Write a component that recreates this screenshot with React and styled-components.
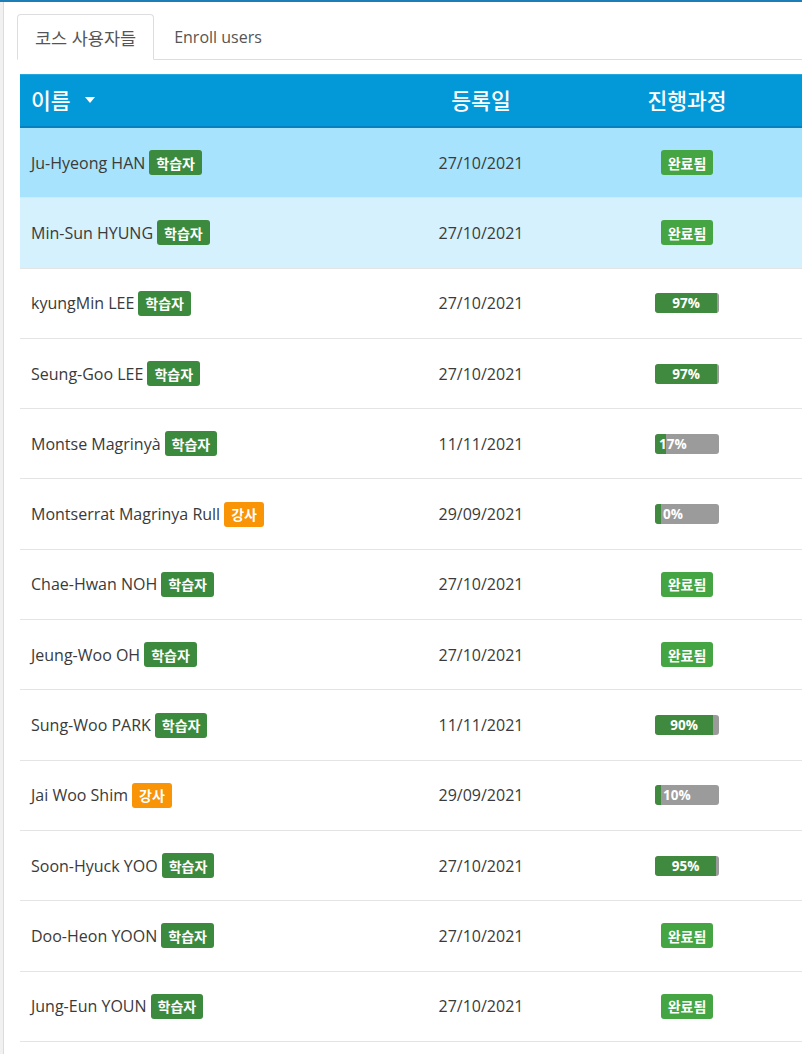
import React from "react";
import styled, { createGlobalStyle } from "styled-components";

const Global = createGlobalStyle`
  html, body { margin: 0; padding: 0; background: #fff; }
  body { font-family: "Open Sans", "Noto Sans CJK KR", sans-serif; color: #333; }
  * { box-sizing: border-box; }
`;

const Page = styled.div`
  border-top: 2px solid #1b7fb5;
  display: flex;
  min-height: 1054px;
  overflow: hidden;
`;

const Gutter = styled.div`
  width: 3px;
  flex: none;
  background: #f1f1f1;
`;

const Main = styled.div`
  flex: 1;
  border-left: 1px solid #dcdcdc;
  padding: 12px 0 0 16px;
  min-width: 0;
`;

const TabBar = styled.div`
  display: flex;
  align-items: flex-end;
  margin-left: -3px;
  border-bottom: 1px solid #dddddd;
  height: 46px;
`;

const Tab = styled.div`
  height: ${(p) => (p.$active ? "46px" : "45px")};
  margin-bottom: ${(p) => (p.$active ? "-1px" : "0")};
  padding: 0 ${(p) => (p.$active ? "17px" : "19px")};
  display: flex;
  align-items: center;
  font-size: ${(p) => (p.$ko ? "17.5px" : "16px")};
  color: #555;
  background: #fff;
  border: 1px solid ${(p) => (p.$active ? "#dddddd" : "transparent")};
  border-bottom-color: ${(p) => (p.$active ? "#fff" : "transparent")};
  border-radius: 4px 4px 0 0;
  padding-top: 1px;
`;

const Table = styled.div`
  margin-top: 14px;
  width: 782px;
`;

const Grid = styled.div`
  display: grid;
  grid-template-columns: 370px 182px 230px;
  align-items: center;
`;

const HeadRow = styled(Grid)`
  height: 54px;
  background: #0399d8;
  border-top: 1px solid #23a8e0;
  border-bottom: 2px solid #0781be;
  color: #fff;
  font-family: "Noto Sans CJK KR", "Open Sans", sans-serif;
  font-size: 21.5px;
  font-weight: 500;
`;

const HeadCell = styled.div`
  display: flex;
  align-items: center;
  justify-content: ${(p) => (p.$center ? "center" : "flex-start")};
  padding-left: ${(p) => (p.$center ? "0" : "11px")};
  padding-bottom: 3px;
  gap: 14px;
`;

const Caret = styled.span`
  width: 0;
  height: 0;
  border-left: 5.5px solid transparent;
  border-right: 5.5px solid transparent;
  border-top: 6px solid #fff;
  margin-top: 2px;
`;

const Row = styled(Grid)`
  height: 70.3px;
  border-bottom: 1px solid #e4e4e4;
  background: ${(p) => p.$bg || "#fff"};
  font-size: 16px;
  color: #3a3a3a;
`;

const NameCell = styled.div`
  padding-left: 11px;
  display: flex;
  align-items: center;
  gap: 4px;
  white-space: nowrap;
`;

const Center = styled.div`
  display: flex;
  justify-content: center;
`;

const Badge = styled.span`
  display: inline-flex;
  align-items: center;
  height: 25px;
  padding: 0 7px;
  border-radius: 3px;
  background: ${(p) => p.$color};
  color: #fff;
  font-family: "Noto Sans CJK KR", sans-serif;
  font-weight: 700;
  font-size: 14px;
`;

const Bar = styled.div`
  position: relative;
  width: 64px;
  height: 20px;
  background: #9b9b9b;
  border-radius: 3px;
  overflow: hidden;
`;

const Fill = styled.div`
  height: 100%;
  background: #3f8a3f;
  border-radius: 3px 0 0 3px;
`;

const BarLabel = styled.span`
  position: absolute;
  top: 0;
  bottom: 0;
  display: flex;
  align-items: center;
  color: #fff;
  font-size: 13.5px;
  font-weight: 700;
  font-family: "Open Sans", sans-serif;
`;

const GREEN = "#3c8a3e";
const ORANGE = "#f89406";
const DONE = "#45a543";

const rows = [
  { name: "Ju-Hyeong HAN", role: "학습자", date: "27/10/2021", done: true, bg: "#a7e3fc" },
  { name: "Min-Sun HYUNG", role: "학습자", date: "27/10/2021", done: true, bg: "#d4f1fd" },
  { name: "kyungMin LEE", role: "학습자", date: "27/10/2021", pct: 97 },
  { name: "Seung-Goo LEE", role: "학습자", date: "27/10/2021", pct: 97 },
  { name: "Montse Magrinyà", role: "학습자", date: "11/11/2021", pct: 17 },
  { name: "Montserrat Magrinya Rull", role: "강사", date: "29/09/2021", pct: 0 },
  { name: "Chae-Hwan NOH", role: "학습자", date: "27/10/2021", done: true },
  { name: "Jeung-Woo OH", role: "학습자", date: "27/10/2021", done: true },
  { name: "Sung-Woo PARK", role: "학습자", date: "11/11/2021", pct: 90 },
  { name: "Jai Woo Shim", role: "강사", date: "29/09/2021", pct: 10 },
  { name: "Soon-Hyuck YOO", role: "학습자", date: "27/10/2021", pct: 95 },
  { name: "Doo-Heon YOON", role: "학습자", date: "27/10/2021", done: true },
  { name: "Jung-Eun YOUN", role: "학습자", date: "27/10/2021", done: true },
];

function Progress({ pct }) {
  const fillW = Math.max(6, Math.round((64 * pct) / 100));
  const big = pct >= 50;
  const labelStyle = big
    ? { left: 0, width: fillW, justifyContent: "center" }
    : { left: pct >= 15 ? 4 : 8 };
  return (
    <Bar>
      <Fill style={{ width: fillW }} />
      <BarLabel style={labelStyle}>{pct}%</BarLabel>
    </Bar>
  );
}

export default function App() {
  return (
    <>
      <Global />
      <Page>
        <Gutter />
        <Main>
          <TabBar>
            <Tab $active $ko>코스 사용자들</Tab>
            <Tab>Enroll users</Tab>
          </TabBar>
          <Table>
            <HeadRow>
              <HeadCell>
                이름 <Caret />
              </HeadCell>
              <HeadCell $center>등록일</HeadCell>
              <HeadCell $center>진행과정</HeadCell>
            </HeadRow>
            {rows.map((r) => (
              <Row key={r.name} $bg={r.bg}>
                <NameCell>
                  {r.name}
                  <Badge $color={r.role === "강사" ? ORANGE : GREEN}>{r.role}</Badge>
                </NameCell>
                <Center>{r.date}</Center>
                <Center>
                  {r.done ? <Badge $color={DONE}>완료됨</Badge> : <Progress pct={r.pct} />}
                </Center>
              </Row>
            ))}
          </Table>
        </Main>
      </Page>
    </>
  );
}
